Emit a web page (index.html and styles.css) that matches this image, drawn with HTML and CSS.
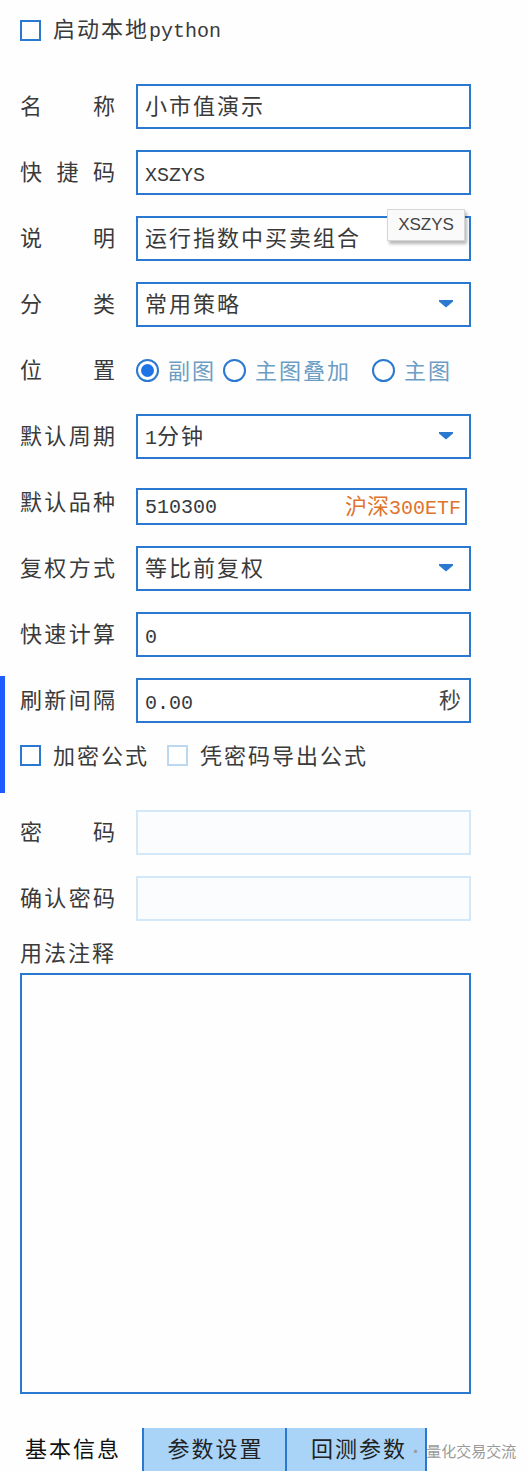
FILE: index.html
```html
<!DOCTYPE html>
<html lang="zh-CN">
<head>
  <meta charset="UTF-8">
  <title>公式属性 - 基本信息</title>
  <link rel="stylesheet" href="styles.css">
</head>
<body>

<div class="side-mark"></div>

<div class="panel">
  <label class="check check--top">
    <span class="check__box"></span>
    <span class="check__text">启动本地<span class="lat">python</span></span>
  </label>

  <div class="form">
    <div class="row">
      <span class="row__label">名称</span>
      <div class="field"><span class="field__value">小市值演示</span></div>
    </div>
    <div class="row">
      <span class="row__label">快捷码</span>
      <div class="field"><span class="field__value lat">XSZYS</span></div>
    </div>
    <div class="row">
      <span class="row__label">说明</span>
      <div class="field"><span class="field__value">运行指数中买卖组合</span></div>
      <div class="tip">XSZYS</div>
    </div>
    <div class="row">
      <span class="row__label">分类</span>
      <div class="field field--select">
        <span class="field__value">常用策略</span>
        <svg class="arrow" width="14" height="8" viewBox="0 0 14 8"><path d="M0 0H14V1.5L7 7.5L0 1.5Z" fill="#2a78d0"/></svg>
      </div>
    </div>
    <div class="row">
      <span class="row__label">位置</span>
      <div class="radios">
        <span class="radio radio--on"></span><span class="radio__text">副图</span>
        <span class="radio"></span><span class="radio__text">主图叠加</span>
        <span class="radio radio--far"></span><span class="radio__text">主图</span>
      </div>
    </div>
    <div class="row">
      <span class="row__label">默认周期</span>
      <div class="field field--select">
        <span class="field__value"><span class="lat">1</span>分钟</span>
        <svg class="arrow" width="14" height="8" viewBox="0 0 14 8"><path d="M0 0H14V1.5L7 7.5L0 1.5Z" fill="#2a78d0"/></svg>
      </div>
    </div>
    <div class="row">
      <span class="row__label">默认品种</span>
      <div class="field field--short">
        <span class="field__value lat">510300</span>
        <span class="field__extra">沪深<span class="lat">300ETF</span></span>
      </div>
    </div>
    <div class="row">
      <span class="row__label">复权方式</span>
      <div class="field field--select">
        <span class="field__value">等比前复权</span>
        <svg class="arrow" width="14" height="8" viewBox="0 0 14 8"><path d="M0 0H14V1.5L7 7.5L0 1.5Z" fill="#2a78d0"/></svg>
      </div>
    </div>
    <div class="row">
      <span class="row__label">快速计算</span>
      <div class="field"><span class="field__value lat">0</span></div>
    </div>
    <div class="row">
      <span class="row__label">刷新间隔</span>
      <div class="field">
        <span class="field__value lat">0.00</span>
        <span class="field__unit">秒</span>
      </div>
    </div>
  </div>

  <div class="checks">
    <label class="check">
      <span class="check__box"></span>
      <span class="check__text">加密公式</span>
    </label>
    <label class="check check--off">
      <span class="check__box"></span>
      <span class="check__text">凭密码导出公式</span>
    </label>
  </div>

  <div class="form form--pwd">
    <div class="row">
      <span class="row__label">密码</span>
      <div class="field field--disabled"></div>
    </div>
    <div class="row">
      <span class="row__label">确认密码</span>
      <div class="field field--disabled"></div>
    </div>
  </div>

  <div class="notes">
    <div class="notes__label">用法注释</div>
    <div class="notes__box"></div>
  </div>
</div>

<div class="tabs">
  <span class="tab tab--active">基本信息</span>
  <span class="tab">参数设置</span>
  <span class="tab tab--last">回测参数</span>
  <span class="watermark">· 量化交易交流</span>
</div>

</body>
</html>
```

FILE: styles.css
```css
body {
  margin: 0;
  background-color: #fefefe;
  color: #3a3a3a;
  font-family: "Noto Sans CJK SC", "Liberation Serif", serif;
  font-size: 22px;
  letter-spacing: 2px;
  position: relative;
  height: 1471px;
  overflow: hidden;
}
.lat {
  font-family: "Liberation Mono", "Noto Sans CJK SC", monospace;
  font-size: 20px;
  letter-spacing: 0;
}
.side-mark {
  position: absolute;
  left: 0;
  top: 676px;
  width: 5px;
  height: 117px;
  background-color: #1f5cff;
}
.panel {
  padding-left: 20px;
  width: 451px;
}
.check {
  display: flex;
  align-items: center;
  height: 22px;
}
.check--top {
  margin-top: 19px;
}
.check__box {
  width: 17px;
  height: 17px;
  border: 2px solid #2a78d0;
  background-color: #fff;
}
.check--off .check__box {
  border-color: #bcd7f0;
}
.check__text {
  margin-left: 12px;
  line-height: 22px;
  padding-bottom: 2px;
}
.form {
  margin-top: 43px;
}
.row {
  position: relative;
  display: flex;
  align-items: center;
  height: 45px;
  margin-bottom: 21px;
}
.row__label {
  width: 95px;
  margin-right: 21px;
  padding-bottom: 5px;
  letter-spacing: 0;
  text-align: justify;
  text-align-last: justify;
  white-space: nowrap;
}
.field {
  flex: 1;
  box-sizing: border-box;
  height: 45px;
  border: 2px solid #2a78d0;
  background-color: #fff;
  display: flex;
  align-items: center;
  padding: 0 8px 5px 7px;
}
.field--short {
  flex: none;
  width: 331px;
  height: 37px;
  align-self: flex-end;
}
.field--disabled {
  border-color: #d3e8f8;
  background-color: #fbfcfe;
}
.field__value {
  flex: 1;
  white-space: nowrap;
}
.field__value.lat {
  margin-top: 11px;
}
.field--short .field__value.lat {
  margin-top: 6px;
}
.field__extra {
  color: #e0742a;
  margin-right: -4px;
  letter-spacing: 0;
}
.field__unit {
  color: #444;
  letter-spacing: 0;
}
.field--select .arrow {
  margin-right: 8px;
  margin-top: 3px;
}
.tip {
  position: absolute;
  left: 367px;
  top: -7px;
  width: 78px;
  height: 32px;
  box-sizing: border-box;
  background-color: #fafafa;
  border: 1px solid #d6d6d6;
  box-shadow: 2px 3px 3px rgba(0, 0, 0, 0.28);
  font-family: "Liberation Sans", "Noto Sans", sans-serif;
  font-size: 17px;
  letter-spacing: 0;
  color: #444;
  text-align: center;
  line-height: 30px;
}
.radios {
  display: flex;
  align-items: center;
}
.radio {
  width: 19px;
  height: 19px;
  border: 2px solid #2a78d0;
  border-radius: 50%;
  background-color: #fff;
  position: relative;
}
.radio--on::after {
  content: "";
  position: absolute;
  left: 3px;
  top: 3px;
  width: 13px;
  height: 13px;
  border-radius: 50%;
  background-color: #1e74e6;
}
.radio--far {
  margin-left: 14px;
}
.radio__text {
  color: #6c9dc4;
  margin-left: 9px;
  margin-right: 7px;
  padding-bottom: 3px;
}
.checks {
  display: flex;
  gap: 18px;
}
.form--pwd {
  margin-top: 44px;
}
.notes__label {
  line-height: 22px;
  margin-top: -2px;
  padding-bottom: 2px;
}
.notes__box {
  margin-top: 9px;
  box-sizing: border-box;
  height: 421px;
  border: 2px solid #2a78d0;
  background-color: #fefefe;
}
.tabs {
  position: relative;
  display: flex;
  margin-top: 34px;
  height: 44px;
}
.tab {
  box-sizing: border-box;
  width: 143px;
  text-align: center;
  line-height: 38px;
  color: #222;
  background-color: #a9d4f8;
  border-left: 2px solid #2a78d0;
  padding-left: 2px;
}
.tab--last {
  border-right: 2px solid #2a78d0;
  width: 142px;
  padding-left: 6px;
}
.tab--active {
  width: 142px;
  padding-left: 25px;
  text-align: left;
  background-color: transparent;
  border-left: none;
  color: #111;
}
.watermark {
  position: absolute;
  left: 408px;
  top: 12px;
  font-family: "Noto Sans CJK SC", sans-serif;
  font-size: 15px;
  letter-spacing: 0;
  color: #9a9a9a;
}
```
